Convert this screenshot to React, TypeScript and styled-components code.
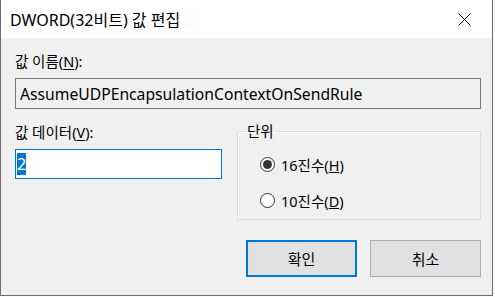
import React from 'react';
import styled, {createGlobalStyle} from 'styled-components';

const GlobalStyle = createGlobalStyle`
  html, body {
    margin: 0;
    padding: 0;
    background: #fafafa;
  }
  body {
    font-family: "Segoe UI", "Noto Sans", "Noto Sans CJK KR", sans-serif;
    color: #000;
  }
`;

const Window = styled.div`
  width: 493px;
  height: 296px;
  box-sizing: border-box;
  display: flex;
  flex-direction: column;
  border: 1px solid #6e6e6e;
  border-top: none;
  background: #f0f0f0;
`;

const TitleBar = styled.div`
  height: 38px;
  flex: 0 0 38px;
  background: #fff;
  display: flex;
  align-items: center;
  justify-content: space-between;
  padding: 0 21px 0 9px;
`;

const Title = styled.div`
  font-size: 16px;
  line-height: 20px;
  padding-top: 1px;
`;

const Body = styled.div`
  flex: 1;
  padding: 14px 11px 0 14px;
  display: flex;
  flex-direction: column;
`;

const Label = styled.div`
  font-size: 14.5px;
  line-height: 19px;
  height: 19px;
  u {
    text-underline-offset: 2px;
  }
`;

const NameBox = styled.div`
  margin-top: 7px;
  height: 31px;
  box-sizing: border-box;
  border: 1px solid #7a7a7a;
  background: #f0f0f0;
  display: flex;
  align-items: center;
  padding-left: 4px;
  font-size: 15.7px;
`;

const Row = styled.div`
  display: flex;
  margin-top: 14px;
  gap: 15px;
`;

const DataColumn = styled.div`
  width: 207px;
  display: flex;
  flex-direction: column;
`;

const DataBox = styled.div`
  margin-top: 7px;
  height: 30px;
  box-sizing: border-box;
  border: 1px solid #0078d7;
  background: #fff;
  display: flex;
  align-items: center;
  padding-left: 1px;
  font-size: 16px;
`;

const Selected = styled.span`
  background: #0078d7;
  color: #fff;
  line-height: 22px;
`;

const GroupBox = styled.fieldset`
  flex: 1;
  margin: 1px 0 0;
  padding: 0;
  height: 96px;
  box-sizing: border-box;
  border: 1px solid #dcdcdc;
  box-shadow: inset 1px 1px 0 #fff;
`;

const Legend = styled.legend`
  font-size: 14.5px;
  padding: 0 1px;
  margin-left: 8px;
  line-height: 14px;
`;

const RadioList = styled.div`
  display: flex;
  flex-direction: column;
  gap: 15px;
  padding: 16px 0 0 22px;
`;

const RadioRow = styled.div`
  display: flex;
  align-items: center;
  gap: 6px;
  font-size: 14.5px;
  height: 21px;
`;

const RadioCircle = styled.span<{$checked?: boolean}>`
  width: 15px;
  height: 15px;
  box-sizing: border-box;
  border-radius: 50%;
  border: 1px solid #333;
  background: #fff;
  display: flex;
  align-items: center;
  justify-content: center;
  &::after {
    content: '';
    width: 9px;
    height: 9px;
    border-radius: 50%;
    background: #333;
    display: ${p => (p.$checked ? 'block' : 'none')};
  }
`;

const Buttons = styled.div`
  display: flex;
  justify-content: flex-end;
  gap: 13px;
  margin-top: 20px;
`;

const Button = styled.div<{$primary?: boolean}>`
  width: 111px;
  height: 37px;
  box-sizing: border-box;
  background: #e1e1e1;
  border: ${p => (p.$primary ? '2px solid #0078d7' : '1px solid #adadad')};
  display: flex;
  align-items: center;
  justify-content: center;
  font-size: 15px;
`;

function CloseIcon() {
  return (
    <svg width="13" height="13" viewBox="0 0 13 13">
      <path d="M0.5 0.5 L12.5 12.5 M12.5 0.5 L0.5 12.5" stroke="#000" strokeWidth="1" fill="none" />
    </svg>
  );
}

export default function App() {
  return (
    <>
      <GlobalStyle />
      <Window>
        <TitleBar>
          <Title>DWORD(32비트) 값 편집</Title>
          <CloseIcon />
        </TitleBar>
        <Body>
          <Label>
            값 이름(<u>N</u>):
          </Label>
          <NameBox>AssumeUDPEncapsulationContextOnSendRule</NameBox>
          <Row>
            <DataColumn>
              <Label>
                값 데이터(<u>V</u>):
              </Label>
              <DataBox>
                <Selected>2</Selected>
              </DataBox>
            </DataColumn>
            <GroupBox>
              <Legend>단위</Legend>
              <RadioList>
                <RadioRow>
                  <RadioCircle $checked />
                  <span>
                    16진수(<u>H</u>)
                  </span>
                </RadioRow>
                <RadioRow>
                  <RadioCircle />
                  <span>
                    10진수(<u>D</u>)
                  </span>
                </RadioRow>
              </RadioList>
            </GroupBox>
          </Row>
          <Buttons>
            <Button $primary>확인</Button>
            <Button>취소</Button>
          </Buttons>
        </Body>
      </Window>
    </>
  );
}
